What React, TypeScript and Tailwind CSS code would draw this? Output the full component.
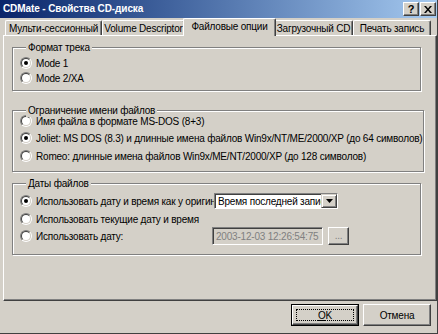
import type { ReactNode } from 'react';

const TABS = [
  { label: 'Мульти-сессионный', w: 'w-[97px]' },
  { label: 'Volume Descriptor', w: 'w-[83px]' },
  { label: 'Файловые опции', w: 'w-[93px]', active: true },
  { label: 'Загрузочный CD', w: 'w-[79px]' },
  { label: 'Печать запись', w: 'w-[78px]' },
];

export default function App() {
  return (
    <div className="w-[438px] h-[334px] bg-[#d4d0c8] flex flex-col overflow-hidden border-r border-b border-[#404040] text-[10px] tracking-[-0.2px] text-black font-['Liberation_Sans',Arial,sans-serif]">
      {/* Title bar */}
      <div className="h-[18px] shrink-0 flex items-center bg-linear-to-r from-[#0a246a] to-[#a6caf0] pl-[3px] pr-[1px]">
        <span className="flex-1 text-white font-bold text-[10px] tracking-[-0.1px] leading-none">
          CDMate - Свойства CD-диска
        </span>
        <div className="flex gap-[1px]">
          <CaptionButton>
            <span className="font-bold text-[11px] leading-none">?</span>
          </CaptionButton>
          <CaptionButton>
            <svg width="8" height="7" viewBox="0 0 8 7" aria-hidden="true">
              <path d="M0 0h2l2 2.5L6 0h2L5 3.5 8 7H6L4 4.5 2 7H0l3-3.5z" fill="#000" />
            </svg>
          </CaptionButton>
        </div>
      </div>

      <div className="flex-1 flex flex-col pl-[3px]">
        {/* Tabs */}
        <div className="h-[17px] shrink-0 flex items-end pl-[2px]">
          {TABS.map((t) =>
            t.active ? (
              <div
                key={t.label}
                className={`${t.w} h-[18px] -mx-[2px] -mb-px relative z-10 bg-[#d4d0c8] flex items-center justify-center whitespace-nowrap pb-[2px] border-t border-l border-white border-r border-r-[#404040] shadow-[inset_-1px_0_0_#808080] rounded-tl-[2px] rounded-tr-[2px]`}
              >
                {t.label}
              </div>
            ) : (
              <div
                key={t.label}
                className={`${t.w} h-[15px] flex items-center justify-center whitespace-nowrap border-t border-l border-white border-r border-r-[#404040] shadow-[inset_-1px_0_0_#808080] rounded-tl-[2px] rounded-tr-[2px]`}
              >
                {t.label}
              </div>
            ),
          )}
        </div>

        {/* Panel */}
        <div className="h-[266px] shrink-0 flex flex-col pt-[5px] pl-[8px] border-t border-l border-white border-r border-b border-r-[#404040] border-b-[#404040] shadow-[inset_-1px_-1px_0_#808080]">
          <Group label="Формат трека" className="pb-[5px]">
            <Option checked label="Mode 1" className="mt-[2px]" />
            <Option label="Mode 2/XA" className="mt-[1px]" />
          </Group>

          <Group label="Ограничение имени файлов" className="mt-[13px] pb-[8px]">
            <Option label="Имя файла в формате MS-DOS (8+3)" className="-mt-[3px]" />
            <Option
              checked
              label="Joliet: MS DOS (8.3) и длинные имена файлов Win9x/NT/ME/2000/XP (до 64 символов)"
              className="mt-[3px]"
            />
            <Option label="Romeo: длинные имена файлов Win9x/ME/NT/2000/XP (до 128 символов)" className="mt-[4px]" />
          </Group>

          <Group label="Даты файлов" className="mt-[5px] pb-[9px]">
            <div className="h-[16px] mt-[3px] flex items-center">
              <Radio checked />
              <span className="w-[178px] ml-[4px] overflow-hidden whitespace-nowrap">
                Использовать дату и время как у оригинала
              </span>
              <div className="w-[124px] h-[16px] flex bg-white border border-t-[#808080] border-l-[#808080] border-r-white border-b-white shadow-[inset_1px_1px_0_#404040]">
                <span className="flex-1 pl-[3px] pt-[1px] leading-[13px] overflow-hidden whitespace-nowrap">
                  Время последней записи
                </span>
                <span className="w-[16px] h-[14px] flex items-center justify-center bg-[#d4d0c8] border border-t-[#d4d0c8] border-l-[#d4d0c8] border-r-[#404040] border-b-[#404040] shadow-[inset_1px_1px_0_#fff,inset_-1px_-1px_0_#808080]">
                  <svg width="7" height="4" viewBox="0 0 7 4" aria-hidden="true">
                    <polygon points="0,0 7,0 3.5,4" fill="#000" />
                  </svg>
                </span>
              </div>
            </div>
            <Option label="Использовать текущие дату и время" className="mt-[3px]" />
            <div className="h-[18px] mt-[1px] flex items-center">
              <Radio />
              <span className="w-[176px] ml-[4px] whitespace-nowrap">Использовать дату:</span>
              <div className="w-[111px] h-[18px] flex items-center pl-[3px] text-[#808080] whitespace-nowrap overflow-hidden border border-t-[#808080] border-l-[#808080] border-r-white border-b-white shadow-[inset_1px_1px_0_#404040]">
                2003-12-03 12:26:54:75
              </div>
              <div className="w-[21px] h-[18px] ml-[5px] flex items-end justify-center pb-[3px] text-[#808080] leading-none border border-t-white border-l-white border-r-[#404040] border-b-[#404040] shadow-[inset_-1px_-1px_0_#808080]">
                ...
              </div>
            </div>
          </Group>
        </div>

        {/* Footer buttons */}
        <div className="flex-1 flex justify-end items-start gap-[4px] pt-[3px] pr-[6px]">
          <div className="w-[68px] h-[22px] border border-black">
            <div className="w-full h-full p-[3px] border border-t-white border-l-white border-r-[#404040] border-b-[#404040] shadow-[inset_-1px_-1px_0_#808080]">
              <div className="w-full h-full flex items-center justify-center border border-dotted border-black">
                <span>
                  <u>O</u>K
                </span>
              </div>
            </div>
          </div>
          <div className="w-[68px] h-[22px] flex items-center justify-center border border-t-white border-l-white border-r-[#404040] border-b-[#404040] shadow-[inset_-1px_-1px_0_#808080]">
            Отмена
          </div>
        </div>
      </div>
    </div>
  );
}

function CaptionButton({ children }: { children: ReactNode }) {
  return (
    <div className="w-[16px] h-[14px] flex items-center justify-center bg-[#d4d0c8] border border-t-white border-l-white border-r-[#404040] border-b-[#404040] shadow-[inset_-1px_-1px_0_#808080]">
      {children}
    </div>
  );
}

function Group({ label, className, children }: { label: string; className?: string; children: ReactNode }) {
  return (
    <fieldset
      className={`w-[409px] pl-[7px] border border-[#808080] shadow-[inset_1px_1px_0_#fff,1px_1px_0_#fff] ${className ?? ''}`}
    >
      <legend className="ml-[6px] px-[2px] leading-[13px] bg-[#d4d0c8] relative">{label}</legend>
      {children}
    </fieldset>
  );
}

function Option({ label, checked, className }: { label: string; checked?: boolean; className?: string }) {
  return (
    <div className={`h-[14px] flex items-center ${className ?? ''}`}>
      <Radio checked={checked} />
      <span className="ml-[4px] whitespace-nowrap">{label}</span>
    </div>
  );
}

function Radio({ checked }: { checked?: boolean }) {
  return (
    <span className="flex w-[12px] h-[12px] shrink-0 rounded-full border border-t-[#808080] border-l-[#808080] border-r-white border-b-white">
      <span className="flex w-full h-full items-center justify-center rounded-full bg-white border border-t-[#404040] border-l-[#404040] border-r-[#d4d0c8] border-b-[#d4d0c8]">
        {checked && <span className="w-[4px] h-[4px] rounded-full bg-black" />}
      </span>
    </span>
  );
}
